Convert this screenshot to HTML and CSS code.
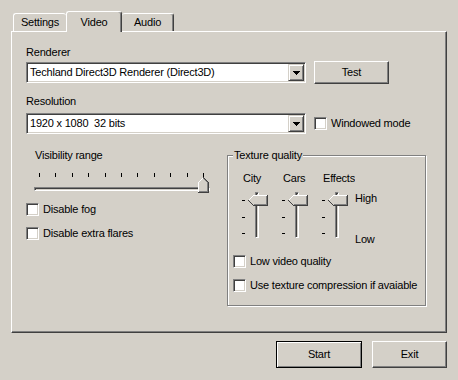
FILE: index.html
```html
<!DOCTYPE html>
<html lang="en">
<head>
  <meta charset="UTF-8">
  <title>Video</title>
  <link rel="stylesheet" href="styles.css">
</head>
<body>

<div class="dialog">
  <div class="tabs">
    <div class="tab first">Settings</div>
    <div class="tab active">Video</div>
    <div class="tab last">Audio</div>
  </div>

  <div class="panel">
    <div class="label label-renderer">Renderer</div>
    <div class="row row-main">
      <div class="combo">
        <span class="combo-text">Techland Direct3D Renderer (Direct3D)</span>
        <span class="drop">
          <svg width="7" height="4" viewBox="0 0 7 4"><path d="M0 0h7v1H0z M1 1h5v1H1z M2 2h3v1H2z M3 3h1v1H3z" fill="#000"/></svg>
        </span>
      </div>
      <button class="btn test">Test</button>
    </div>

    <div class="label label-res">Resolution</div>
    <div class="row row-res">
      <div class="combo">
        <span class="combo-text">1920 x 1080  32 bits</span>
        <span class="drop">
          <svg width="7" height="4" viewBox="0 0 7 4"><path d="M0 0h7v1H0z M1 1h5v1H1z M2 2h3v1H2z M3 3h1v1H3z" fill="#000"/></svg>
        </span>
      </div>
      <label class="check"><span class="box"></span>Windowed mode</label>
    </div>

    <div class="lower">
      <div class="left">
        <div class="label vis">Visibility range</div>
        <div class="hslider">
          <div class="hticks"><i></i><i></i><i></i><i></i><i></i><i></i><i></i><i></i><i></i><i></i><i></i></div>
          <div class="hchannel"></div>
          <svg class="hthumb" width="11" height="16" viewBox="0 0 11 16" shape-rendering="crispEdges">
            <polygon points="0,5 5,0 10,5 10,16 0,16" fill="#d4d0c8"/>
            <polyline points="0.5,16 0.5,5.5 5.5,0.5" fill="none" stroke="#fff"/>
            <polyline points="5.5,0.5 10.5,5.5 10.5,15.5 0,15.5" fill="none" stroke="#404040"/>
            <polyline points="5.5,1.5 9.5,5.5 9.5,14.5 1,14.5" fill="none" stroke="#808080"/>
          </svg>
        </div>
        <label class="check"><span class="box"></span>Disable fog</label>
        <label class="check"><span class="box"></span>Disable extra flares</label>
      </div>

      <fieldset class="group">
        <legend>Texture quality</legend>
        <div class="sliders">
          <div class="col-label">City</div>
          <div class="col-label">Cars</div>
          <div class="col-label">Effects</div>
          <div></div>

          <div class="vslider">
            <div class="vticks"><i></i><i></i><i></i></div>
            <div class="vchannel"></div>
            <svg class="vthumb" width="20" height="11" viewBox="0 0 20 11" shape-rendering="crispEdges">
              <polygon points="0,5 5,0 20,0 20,11 5,11" fill="#d4d0c8"/>
              <polyline points="0.5,5.5 5.5,0.5 19,0.5" fill="none" stroke="#fff"/>
              <polyline points="19.5,0 19.5,10.5 5.5,10.5 0.5,5.5" fill="none" stroke="#404040"/>
              <polyline points="18.5,1 18.5,9.5 5.5,9.5" fill="none" stroke="#808080"/>
            </svg>
          </div>
          <div class="vslider">
            <div class="vticks"><i></i><i></i><i></i></div>
            <div class="vchannel"></div>
            <svg class="vthumb" width="20" height="11" viewBox="0 0 20 11" shape-rendering="crispEdges">
              <polygon points="0,5 5,0 20,0 20,11 5,11" fill="#d4d0c8"/>
              <polyline points="0.5,5.5 5.5,0.5 19,0.5" fill="none" stroke="#fff"/>
              <polyline points="19.5,0 19.5,10.5 5.5,10.5 0.5,5.5" fill="none" stroke="#404040"/>
              <polyline points="18.5,1 18.5,9.5 5.5,9.5" fill="none" stroke="#808080"/>
            </svg>
          </div>
          <div class="vslider">
            <div class="vticks"><i></i><i></i><i></i></div>
            <div class="vchannel"></div>
            <svg class="vthumb" width="20" height="11" viewBox="0 0 20 11" shape-rendering="crispEdges">
              <polygon points="0,5 5,0 20,0 20,11 5,11" fill="#d4d0c8"/>
              <polyline points="0.5,5.5 5.5,0.5 19,0.5" fill="none" stroke="#fff"/>
              <polyline points="19.5,0 19.5,10.5 5.5,10.5 0.5,5.5" fill="none" stroke="#404040"/>
              <polyline points="18.5,1 18.5,9.5 5.5,9.5" fill="none" stroke="#808080"/>
            </svg>
          </div>
          <div class="scale"><span>High</span><span>Low</span></div>
        </div>
        <label class="check check-first"><span class="box"></span>Low video quality</label>
        <label class="check"><span class="box"></span>Use texture compression if avaiable</label>
      </fieldset>
    </div>
  </div>

  <div class="actions">
    <button class="btn start">Start</button>
    <button class="btn exit">Exit</button>
  </div>
</div>

</body>
</html>
```

FILE: styles.css
```css
body {
  margin: 0;
  background-color: #d4d0c8;
  font-family: "Liberation Sans", Arial, sans-serif;
  font-size: 11px;
  line-height: 13px;
  letter-spacing: -0.2px;
  color: #000;
}
.dialog {
  box-sizing: border-box;
  width: 458px;
  height: 380px;
  padding: 11px 11px 0 11px;
}

/* tabs */
.tabs {
  display: flex;
  align-items: flex-end;
  height: 20px;
  padding-left: 2px;
}
.tab {
  box-sizing: border-box;
  height: 18px;
  line-height: 17px;
  text-align: center;
  border: 1px solid;
  border-bottom: 0;
  border-color: #fff #404040 #fff #fff;
  box-shadow: inset -1px 0 #808080;
  border-radius: 3px 3px 0 0;
}
.tab.first {
  width: 53px;
  border-right: 0;
  box-shadow: none;
}
.tab.active {
  width: 56px;
  height: 21px;
  line-height: 18px;
  padding-top: 1px;
  margin-bottom: -1px;
  position: relative;
  z-index: 1;
  background-color: #d4d0c8;
}
.tab.last {
  width: 52px;
  border-left: 0;
}

.panel {
  box-sizing: border-box;
  height: 302px;
  border: 1px solid;
  border-color: #fff #404040 #404040 #fff;
  box-shadow: inset -1px -1px #808080;
  padding: 14px 0 0 14px;
}
.label {
  height: 13px;
  white-space: nowrap;
}
.label-renderer {
  margin-bottom: 2px;
}
.label-res {
  margin-top: 11px;
  margin-bottom: 5px;
}
.row {
  display: flex;
  align-items: center;
  gap: 8px;
}
.row-main {
  height: 23px;
}
.row-res {
  height: 21px;
}

/* combo */
.combo {
  box-sizing: border-box;
  display: flex;
  align-items: center;
  width: 280px;
  height: 21px;
  padding: 1px;
  background-color: #fff;
  border: 1px solid;
  border-color: #808080 #fff #fff #808080;
  box-shadow: inset 1px 1px #404040, inset -1px -1px #d4d0c8;
}
.combo-text {
  flex: 1;
  padding-left: 2px;
  white-space: pre;
}
.drop {
  box-sizing: border-box;
  display: flex;
  align-items: center;
  justify-content: center;
  width: 16px;
  height: 17px;
  background-color: #d4d0c8;
  border: 1px solid;
  border-color: #d4d0c8 #404040 #404040 #d4d0c8;
  box-shadow: inset 1px 1px #fff, inset -1px -1px #808080;
}

/* buttons */
.btn {
  box-sizing: border-box;
  margin: 0;
  padding: 0;
  font: inherit;
  letter-spacing: inherit;
  color: #000;
  background-color: #d4d0c8;
  border: 1px solid;
  border-color: #fff #404040 #404040 #fff;
  box-shadow: inset -1px -1px #808080;
}
.btn.test {
  width: 75px;
  height: 23px;
}
.btn.start {
  width: 86px;
  height: 27px;
  border-color: #000;
  box-shadow: inset 1px 1px #fff, inset -1px -1px #808080;
}
.btn.exit {
  width: 75px;
  height: 27px;
}
.actions {
  display: flex;
  justify-content: flex-end;
  gap: 10px;
  margin-top: 8px;
}

/* checkboxes */
.check {
  display: flex;
  align-items: center;
  gap: 4px;
  height: 24px;
  white-space: nowrap;
}
.row .check {
  height: 21px;
}
.box {
  box-sizing: border-box;
  width: 13px;
  height: 13px;
  background-color: #fff;
  border: 1px solid;
  border-color: #808080 #fff #fff #808080;
  box-shadow: inset 1px 1px #404040, inset -1px -1px #d4d0c8;
}

/* lower part */
.lower {
  display: flex;
  margin-top: 15px;
}
.left {
  width: 201px;
}
.vis {
  margin-left: 9px;
}
.hslider {
  position: relative;
  height: 18px;
  margin-top: 11px;
  margin-bottom: 6px;
}
.hticks {
  display: flex;
  justify-content: space-between;
  width: 165px;
  height: 4px;
  margin-left: 13px;
}
.hticks i {
  width: 1px;
  background-color: #000;
}
.hchannel {
  box-sizing: border-box;
  width: 176px;
  height: 4px;
  margin: 10px 0 0 8px;
  border: 1px solid;
  border-color: #808080 #fff #fff #808080;
  box-shadow: inset 1px 1px #404040, inset -1px -1px #d4d0c8;
}
.hthumb {
  position: absolute;
  left: 172px;
  top: 4px;
}

/* texture group */
.group {
  box-sizing: border-box;
  width: 199px;
  min-width: 0;
  margin: 0;
  padding: 10px 0 8px 5px;
  border: 1px solid #808080;
  box-shadow: 1px 1px 0 #fff, inset 1px 1px 0 #fff;
}
.group legend {
  padding: 0 1px;
  line-height: 13px;
  background-color: #d4d0c8;
}
.sliders {
  display: grid;
  grid-template-columns: 40px 40px 35px auto;
  grid-template-rows: 13px 54px;
  row-gap: 7px;
  margin-left: 7px;
}
.col-label {
  padding-left: 3px;
  overflow: hidden;
  white-space: nowrap;
}
.vslider {
  position: relative;
  display: flex;
  height: 54px;
}
.vticks {
  display: flex;
  flex-direction: column;
  justify-content: space-between;
  width: 3px;
  height: 34px;
  margin: 8px 0 0 2px;
}
.vticks i {
  height: 1px;
  background-color: #000;
}
.vchannel {
  box-sizing: border-box;
  width: 4px;
  height: 46px;
  margin-left: 10px;
  border: 1px solid;
  border-color: #808080 #fff #fff #808080;
  box-shadow: inset 1px 1px #404040, inset -1px -1px #d4d0c8;
}
.vthumb {
  position: absolute;
  left: 8px;
  top: 3px;
}
.scale {
  display: flex;
  flex-direction: column;
  justify-content: space-between;
}
.check-first {
  margin-top: 3px;
}
```
